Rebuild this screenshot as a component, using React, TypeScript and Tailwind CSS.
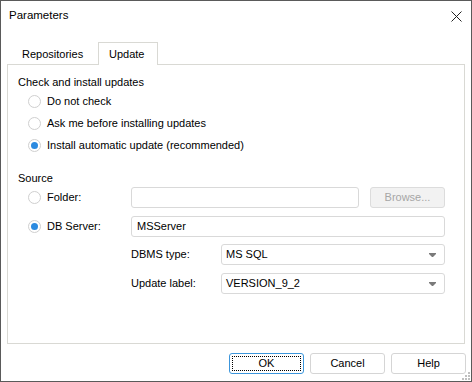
import React from "react";

function Radio({ checked }: { checked?: boolean }) {
  return (
    <span className="w-[13px] h-[13px] rounded-full border border-[#cfcfcf] bg-white flex items-center justify-center shrink-0">
      {checked && <span className="w-[7px] h-[7px] rounded-full bg-[#2b8ae0]" />}
    </span>
  );
}

function Arrow() {
  return (
    <svg width="7" height="4" viewBox="0 0 7 4" className="shrink-0">
      <path d="M0 0 H7 V1 L4 4 H3 L0 1 Z" fill="#7a7a7a" />
    </svg>
  );
}

export default function App() {
  return (
    <div
      className="w-[472px] h-[382px] border border-[#5a5a5a] bg-white flex flex-col text-[11px] text-black relative"
      style={{ fontFamily: '"Liberation Sans", Arial, sans-serif' }}
    >
      {/* title */}
      <div className="h-[29px] flex items-center justify-between pl-[8px] pr-[9px]">
        <span className="text-[11.5px] pt-[1px]">Parameters</span>
        <svg width="11" height="11" viewBox="0 0 11 11" className="mt-[1px]">
          <path d="M0.5 0.5 L10.5 10.5 M10.5 0.5 L0.5 10.5" stroke="#222" strokeWidth="1" />
        </svg>
      </div>
      {/* tabs */}
      <div className="mt-[12px] ml-[6px] h-[22px] flex items-end relative z-10">
        <div className="w-[91px] h-[20px] flex items-center pl-[15px]">Repositories</div>
        <div className="w-[60px] h-[23px] -mb-px border border-b-0 border-[#d9d9d4] bg-white flex items-center pl-[10px]">
          Update
        </div>
      </div>
      {/* panel */}
      <div className="ml-[6px] w-[458px] h-[280px] border border-[#d9d9d4] flex flex-col">
        <div className="mt-[9px] ml-[10px] h-[16px] flex items-center">Check and install updates</div>
        <div className="ml-[20px] flex flex-col">
          <div className="h-[22px] flex items-center gap-[6px]"><Radio /><span>Do not check</span></div>
          <div className="h-[22px] flex items-center gap-[6px]"><Radio /><span>Ask me before installing updates</span></div>
          <div className="h-[22px] flex items-center gap-[6px]"><Radio checked /><span>Install automatic update (recommended)</span></div>
        </div>
        <div className="mt-[14px] ml-[10px] h-[16px] flex items-center">Source</div>
        <div className="mt-[1px] ml-[20px] h-[21px] flex items-center">
          <div className="w-[103px] flex items-center gap-[6px]"><Radio /><span>Folder:</span></div>
          <div className="w-[228px] h-[21px] border border-[#d9d9d9] rounded-[3px] bg-white" />
          <div className="ml-[11px] w-[75px] h-[21px] border border-[#dcdcdc] rounded-[3px] bg-[#f2f2f2] text-[#a6a6a6] flex items-center justify-center">
            Browse...
          </div>
        </div>
        <div className="mt-[8px] ml-[20px] h-[21px] flex items-center">
          <div className="w-[103px] flex items-center gap-[6px]"><Radio checked /><span>DB Server:</span></div>
          <div className="w-[314px] h-[21px] border border-[#d9d9d9] rounded-[3px] bg-white flex items-center pl-[5px]">
            MSServer
          </div>
        </div>
        <div className="mt-[7px] ml-[123px] h-[21px] flex items-center">
          <div className="w-[90px]">DBMS type:</div>
          <div className="w-[224px] h-[21px] border border-[#d9d9d9] rounded-[3px] bg-white flex items-center justify-between pl-[4px] pr-[8px]">
            <span>MS SQL</span>
            <Arrow />
          </div>
        </div>
        <div className="mt-[8px] ml-[123px] h-[21px] flex items-center">
          <div className="w-[90px]">Update label:</div>
          <div className="w-[224px] h-[21px] border border-[#d9d9d9] rounded-[3px] bg-white flex items-center justify-between pl-[4px] pr-[8px]">
            <span>VERSION_9_2</span>
            <Arrow />
          </div>
        </div>
      </div>
      {/* buttons */}
      <div className="mt-[9px] flex justify-end gap-[6px] pr-[5px]">
        <div className="w-[75px] h-[21px] border border-[#3c96dc] rounded-[3px] bg-white p-[2px]">
          <div className="w-full h-full border border-dotted border-black flex items-center justify-center">OK</div>
        </div>
        <div className="w-[75px] h-[21px] border border-[#d5d5d5] rounded-[3px] bg-white flex items-center justify-center">Cancel</div>
        <div className="w-[75px] h-[21px] border border-[#d5d5d5] rounded-[3px] bg-white flex items-center justify-center">Help</div>
      </div>
      {/* resize grip */}
      <svg width="8" height="8" viewBox="0 0 8 8" className="absolute right-[1px] bottom-[1px]">
        <rect x="6" y="0" width="2" height="2" fill="#c0c0c0" />
        <rect x="3" y="3" width="2" height="2" fill="#c0c0c0" />
        <rect x="6" y="3" width="2" height="2" fill="#c0c0c0" />
        <rect x="0" y="6" width="2" height="2" fill="#c0c0c0" />
        <rect x="3" y="6" width="2" height="2" fill="#c0c0c0" />
        <rect x="6" y="6" width="2" height="2" fill="#c0c0c0" />
      </svg>
    </div>
  );
}
